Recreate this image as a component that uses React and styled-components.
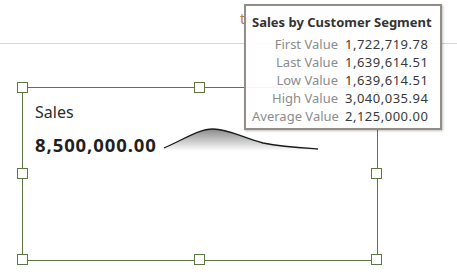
import React from "react";
import styled, { createGlobalStyle } from "styled-components";

const GlobalStyle = createGlobalStyle`
  html, body { margin: 0; padding: 0; background: #ffffff; }
  body { font-family: "Noto Sans", "Open Sans", sans-serif; }
`;

const Page = styled.div`
  position: relative;
  width: 457px;
  height: 276px;
  overflow: hidden;
  background: #ffffff;
`;

const Header = styled.div`
  display: flex;
  align-items: center;
  padding-left: 240px;
  box-sizing: border-box;
  height: 44px;
  border-bottom: 1px solid #d6d6d6;
`;

const HeaderTitle = styled.span`
  color: #c4703c;
  font-size: 14px;
  margin-top: -6px;
`;

const Tile = styled.div`
  position: relative;
  box-sizing: border-box;
  margin: 43px 0 0 22px;
  width: 356px;
  height: 174px;
  border: 1px solid #5b7843;
  padding: 14px 0 0 12px;
`;

const Handle = styled.span`
  position: absolute;
  width: 11px;
  height: 11px;
  box-sizing: border-box;
  border: 1px solid #5b7843;
  background: #ffffff;
  left: calc(${(p) => p.$x}% - 6px);
  top: calc(${(p) => p.$y}% - 6px);
`;

const Label = styled.div`
  font-size: 16px;
  line-height: 20px;
  color: #2b2b2b;
`;

const ValueRow = styled.div`
  display: flex;
  align-items: flex-end;
  margin-top: 4px;
  gap: 6px;
`;

const Value = styled.div`
  font-size: 18.5px;
  font-weight: 700;
  letter-spacing: 0.9px;
  line-height: 24px;
  color: #1f1f1f;
`;

const Spark = styled.svg`
  display: block;
  margin-bottom: 5px;
`;

const Tooltip = styled.div`
  position: absolute;
  left: 244px;
  top: 4px;
  width: 198px;
  height: 126px;
  box-sizing: border-box;
  border: 2px solid #938d88;
  background: rgba(255, 255, 255, 0.93);
  box-shadow: 1px 1px 2px rgba(0, 0, 0, 0.25);
  padding: 7px 0 0 6px;
`;

const TipTitle = styled.div`
  font-size: 13px;
  font-weight: 700;
  line-height: 18px;
  color: #333333;
  white-space: nowrap;
`;

const TipGrid = styled.div`
  display: grid;
  grid-template-columns: 86px auto;
  column-gap: 7px;
  margin-top: 4px;
  font-size: 13px;
  line-height: 18px;
`;

const TipLabel = styled.span`
  text-align: right;
  color: #8c8c8c;
  white-space: nowrap;
`;

const TipValue = styled.span`
  color: #383838;
  letter-spacing: 0.5px;
  white-space: nowrap;
`;

const rows = [
  ["First Value", "1,722,719.78"],
  ["Last Value", "1,639,614.51"],
  ["Low Value", "1,639,614.51"],
  ["High Value", "3,040,035.94"],
  ["Average Value", "2,125,000.00"],
];

const handles = [
  [0, 0], [50, 0], [100, 0],
  [0, 50], [100, 50],
  [0, 100], [50, 100], [100, 100],
];

export default function App() {
  return (
    <Page>
      <GlobalStyle />
      <Header>
        <HeaderTitle>te</HeaderTitle>
      </Header>
      <Tile>
        {handles.map(([x, y]) => (
          <Handle key={`${x}-${y}`} $x={x} $y={y} />
        ))}
        <Label>Sales</Label>
        <ValueRow>
          <Value>8,500,000.00</Value>
          <Spark width="156" height="26" viewBox="0 0 156 26">
            <defs>
              <linearGradient id="sparkFill" x1="0" y1="0" x2="0" y2="1">
                <stop offset="0" stopColor="#8a8a8a" />
                <stop offset="1" stopColor="#ffffff" />
              </linearGradient>
            </defs>
            <path
              d="M1,22 C20,14 35,3 50,3 C65,3 78,11 100,17 C120,21 140,22 155,23 L155,25 L1,25 Z"
              fill="url(#sparkFill)"
            />
            <path
              d="M1,22 C20,14 35,3 50,3 C65,3 78,11 100,17 C120,21 140,22 155,23"
              fill="none"
              stroke="#1a1a1a"
              strokeWidth="1.3"
            />
          </Spark>
        </ValueRow>
      </Tile>
      <Tooltip>
        <TipTitle>Sales by Customer Segment</TipTitle>
        <TipGrid>
          {rows.map(([l, v]) => (
            <React.Fragment key={l}>
              <TipLabel>{l}</TipLabel>
              <TipValue>{v}</TipValue>
            </React.Fragment>
          ))}
        </TipGrid>
      </Tooltip>
    </Page>
  );
}
